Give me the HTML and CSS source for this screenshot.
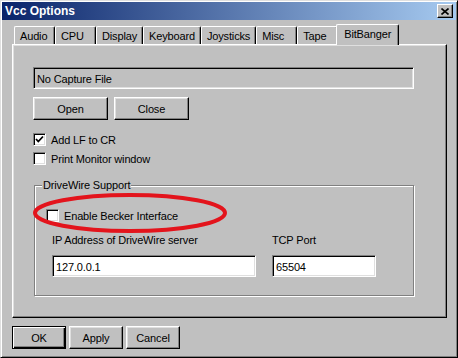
FILE: index.html
```html
<!DOCTYPE html>
<html lang="en">
<head>
  <meta charset="UTF-8">
  <title>Vcc Options</title>
  <link rel="stylesheet" href="styles.css">
</head>
<body>
  <div class="window">
    <div class="titlebar">
      <span class="title">Vcc Options</span>
      <button class="close-btn">
        <svg width="8" height="7" viewBox="0 0 8 7"><path d="M0.5 0.5 L7.5 6.5 M7.5 0.5 L0.5 6.5" stroke="#000" stroke-width="1.6"/></svg>
      </button>
    </div>

    <div class="dialog">
      <div class="tabs">
        <div class="tab">Audio</div>
        <div class="tab">CPU</div>
        <div class="tab">Display</div>
        <div class="tab">Keyboard</div>
        <div class="tab">Joysticks</div>
        <div class="tab">Misc</div>
        <div class="tab">Tape</div>
        <div class="tab active">BitBanger</div>
      </div>

      <div class="panel">
        <div class="field file-field">No Capture File</div>

        <div class="btn-row">
          <button class="btn wide">Open</button>
          <button class="btn wide">Close</button>
        </div>

        <div class="check first">
          <span class="box">
            <svg width="11" height="11" viewBox="0 0 11 11"><path d="M2 5 L4.3 7.5 L9 2.5" fill="none" stroke="#000" stroke-width="1.8"/></svg>
          </span>
          <span>Add LF to CR</span>
        </div>
        <div class="check">
          <span class="box"></span>
          <span>Print Monitor window</span>
        </div>

        <div class="group">
          <span class="group-title">DriveWire Support</span>
          <div class="check">
            <span class="box"></span>
            <span>Enable Becker Interface</span>
          </div>
          <div class="server-row">
            <div class="server-col">
              <div class="lbl">IP Address of DriveWire server</div>
              <div class="field input ip-field">127.0.0.1</div>
            </div>
            <div class="server-col">
              <div class="lbl">TCP Port</div>
              <div class="field input port-field">65504</div>
            </div>
          </div>
        </div>

        <svg class="highlight" width="198" height="42" viewBox="0 0 198 42">
          <ellipse cx="99" cy="21" rx="95" ry="18" fill="none" stroke="#e3141c" stroke-width="4"/>
        </svg>
      </div>

      <div class="footer">
        <button class="btn default">OK</button>
        <button class="btn">Apply</button>
        <button class="btn">Cancel</button>
      </div>
    </div>
  </div>
</body>
</html>
```

FILE: styles.css
```css
* {
  box-sizing: border-box;
}

body {
  margin: 0;
  font-family: "Liberation Sans", Arial, sans-serif;
  font-size: 11px;
  letter-spacing: -0.15px;
  color: #000;
  background-color: #c0c0c0;
}

.window {
  width: 458px;
  height: 358px;
  background-color: #c0c0c0;
  border: 1px solid;
  border-color: #dfdfdf #000 #000 #dfdfdf;
  box-shadow: inset 1px 1px 0 #fff, inset -1px -1px 0 #808080;
  padding: 1px;
  display: flex;
  flex-direction: column;
}

.titlebar {
  height: 18px;
  background: linear-gradient(to right, #0a246a, #a6caf0);
  display: flex;
  align-items: center;
  justify-content: space-between;
  padding: 0 3px;
}

.title {
  color: #fff;
  font-weight: bold;
  font-size: 12px;
  letter-spacing: 0;
}

.close-btn {
  width: 16px;
  height: 14px;
  padding: 0;
  background-color: #c0c0c0;
  border: 1px solid;
  border-color: #fff #000 #000 #fff;
  box-shadow: inset -1px -1px 0 #808080;
  display: flex;
  align-items: center;
  justify-content: center;
}

.dialog {
  flex: 1;
  padding: 4px 9px 0 10px;
}

.tabs {
  display: flex;
  align-items: flex-end;
  height: 20px;
  padding-left: 2px;
}

.tab {
  height: 18px;
  min-width: 41px;
  padding: 3px 5px 0 5px;
  border-top: 1px solid #fff;
  border-left: 1px solid #fff;
  border-right: 1px solid #000;
  border-radius: 2px 2px 0 0;
  box-shadow: inset -1px 0 0 #808080;
  white-space: nowrap;
}

.tab.active {
  position: relative;
  z-index: 2;
  height: 21px;
  margin: 0 -2px -1px -2px;
  padding: 3px 7px 0 7px;
  background-color: #c0c0c0;
}

.panel {
  position: relative;
  height: 274px;
  border: 1px solid;
  border-color: #fff #000 #000 #fff;
  box-shadow: inset -1px -1px 0 #808080, inset 1px 1px 0 #dfdfdf;
  padding: 22px 0 0 20px;
}

.field {
  height: 22px;
  border: 1px solid;
  border-color: #808080 #fff #fff #808080;
  box-shadow: inset 1px 1px 0 #000, inset -1px -1px 0 #dfdfdf;
  padding: 1px 2px 0 3px;
  display: flex;
  align-items: center;
}

.file-field {
  width: 381px;
}

.field.input {
  background-color: #fff;
}

.ip-field {
  width: 204px;
}

.port-field {
  width: 104px;
}

.btn-row {
  display: flex;
  gap: 6px;
  margin-top: 8px;
}

.btn {
  width: 54px;
  height: 23px;
  padding: 0;
  font: inherit;
  letter-spacing: inherit;
  color: #000;
  background-color: #c0c0c0;
  border: 1px solid;
  border-color: #fff #000 #000 #fff;
  box-shadow: inset -1px -1px 0 #808080, inset 1px 1px 0 #dfdfdf;
}

.btn.wide {
  width: 75px;
}

.btn.default {
  border-color: #000;
  box-shadow: inset 1px 1px 0 #fff, inset -1px -1px 0 #000, inset -2px -2px 0 #808080;
}

.check {
  display: flex;
  align-items: center;
  gap: 5px;
  height: 19px;
}

.check.first {
  margin-top: 10px;
}

.box {
  width: 13px;
  height: 13px;
  background-color: #fff;
  border: 1px solid;
  border-color: #808080 #fff #fff #808080;
  box-shadow: inset 1px 1px 0 #000, inset -1px -1px 0 #dfdfdf;
  display: flex;
  align-items: center;
  justify-content: center;
}

.group {
  position: relative;
  width: 380px;
  height: 111px;
  margin: 17px 0 0 1px;
  border: 1px solid #808080;
  box-shadow: inset 1px 1px 0 #fff, 1px 1px 0 #fff;
  padding: 20px 0 0 11px;
}

.group-title {
  position: absolute;
  top: -7px;
  left: 7px;
  padding: 0 1px;
  background-color: #c0c0c0;
}

.server-row {
  display: flex;
  gap: 16px;
  margin: 9px 0 0 6px;
}

.lbl {
  height: 13px;
  margin-bottom: 8px;
}

.highlight {
  position: absolute;
  left: 18px;
  top: 147px;
}

.footer {
  display: flex;
  gap: 3px;
  margin-top: 8px;
}
```
